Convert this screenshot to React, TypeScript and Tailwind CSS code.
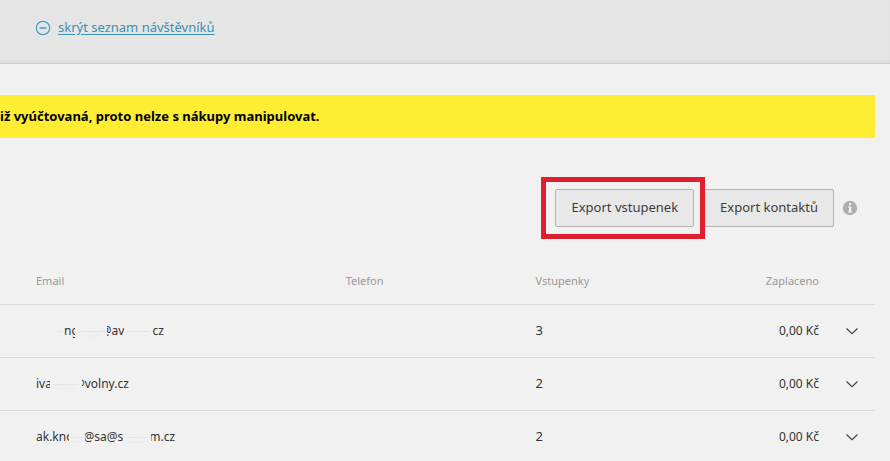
import React from 'react';

interface Visitor {
  id: number;
  email: React.ReactNode;
  phone: string;
  tickets: number;
  paid: string;
}

// Hides a part of the address, leaves only a faint trace of it
const Smudge: React.FC<{ className: string }> = ({ className }) => (
  <svg className={`relative inline-block h-4 shrink-0 bg-[#f1f1f1] ${className}`} viewBox="0 0 30 16" preserveAspectRatio="none" fill="none" aria-hidden="true">
    <path d="M3 9 C10 7 19 10 28 8" stroke="#e2e2e2" />
    <path d="M6 13 C14 12 18 14 25 12" stroke="#e9e9e9" />
  </svg>
);

const visitors: Visitor[] = [
  {
    id: 1,
    email: <><Smudge className="ml-5 w-2" />ng<Smudge className="-ml-1 w-8" /><span className="-ml-1.5">@av</span><Smudge className="w-7" />cz</>,
    phone: '', tickets: 3, paid: '0,00 Kč',
  },
  {
    id: 2,
    email: <>iva<Smudge className="-ml-0.5 w-8" /><span className="-ml-2">@volny.cz</span></>,
    phone: '', tickets: 2, paid: '0,00 Kč',
  },
  {
    id: 3,
    email: <>ak.kno<Smudge className="-ml-1 w-4" /><span className="-ml-0.5">@sa@s</span><Smudge className="w-7" /><span className="-ml-0.5">m.cz</span></>,
    phone: '', tickets: 2, paid: '0,00 Kč',
  },
];

const MinusCircle = () => (
  <svg className="h-4 w-4" viewBox="0 0 16 16" fill="none" stroke="#4a9cc7" aria-hidden="true">
    <circle cx="8" cy="8" r="6.7" strokeWidth="1.2" />
    <path d="M4.5 8h7" strokeWidth="1.5" />
  </svg>
);

const InfoIcon = () => (
  <svg className="h-4 w-4" viewBox="0 0 16 16" aria-hidden="true">
    <circle cx="8" cy="8" r="7.2" fill="#afafaf" />
    <path d="M7 3.2h2.2v2H7zM6.3 6.6h2.9v4.6h.8v1.3H6.1v-1.3H7V7.9h-.7z" fill="#f4f4f4" />
  </svg>
);

const ChevronDown = () => (
  <svg className="h-2 w-3" viewBox="0 0 12 8" fill="none" stroke="#444" strokeWidth="1.2" aria-hidden="true">
    <path d="M.5 1.5 6 6.7l5.5-5.2" />
  </svg>
);

const exportButton = 'h-[38px] rounded-xs border border-[#b4b4b4] bg-[#e8e8e8] px-[15px] text-[#3c3c3c]';

export default function App() {
  return (
    <div className="min-h-screen overflow-hidden bg-[#f1f1f1] font-['Noto_Sans',sans-serif] text-[13px] text-[#333]">
      <header className="flex h-16 items-center border-b border-[#cfcfcf] bg-[#e5e5e5] px-[35px] pb-2 shadow-[inset_0_-2px_2px_#dcdcdc]">
        <a href="#visitors" className="flex items-center gap-[7px] text-[#3a8fb7]">
          <MinusCircle />
          <span className="underline underline-offset-2">skrýt seznam návštěvníků</span>
        </a>
      </header>

      <main className="pt-[31px] pr-[15px]">
        <p className="flex h-[43px] items-center bg-[#ffed33] font-bold text-black">
          iž vyúčtovaná, proto nelze s nákupy manipulovat.
        </p>

        <div className="mt-[51px] flex items-center justify-end gap-2 pr-[17px]">
          <div className="flex gap-2.5">
            <div className="relative">
              <button type="button" className={exportButton}>Export vstupenek</button>
              <div className="pointer-events-none absolute -top-3 -right-[11px] -bottom-3 -left-3.5 z-10 border-5 border-[#df202c]" />
            </div>
            <button type="button" className={exportButton}>Export kontaktů</button>
          </div>
          <button type="button" aria-label="Informace"><InfoIcon /></button>
        </div>

        <table id="visitors" className="mt-[31px] w-full table-fixed border-collapse text-left">
          <thead>
            <tr className="h-[46px] text-[11px] text-[#999]">
              <th className="w-[39.5%] pl-9 font-normal">Email</th>
              <th className="w-[21.7%] font-normal">Telefon</th>
              <th className="w-[20%] font-normal">Vstupenky</th>
              <th className="text-right font-normal">Zaplaceno</th>
              <th className="w-14" />
            </tr>
          </thead>
          <tbody>
            {visitors.map(v => (
              <tr key={v.id} className="h-[53px] border-t border-[#dcdcdc]">
                <td className="pl-9 text-xs"><div className="flex items-center">{v.email}</div></td>
                <td>{v.phone}</td>
                <td>{v.tickets}</td>
                <td className="text-right text-xs">{v.paid}</td>
                <td className="pl-[27px]">
                  <button type="button" aria-label="Zobrazit detail" className="block"><ChevronDown /></button>
                </td>
              </tr>
            ))}
          </tbody>
        </table>
      </main>
    </div>
  );
}
